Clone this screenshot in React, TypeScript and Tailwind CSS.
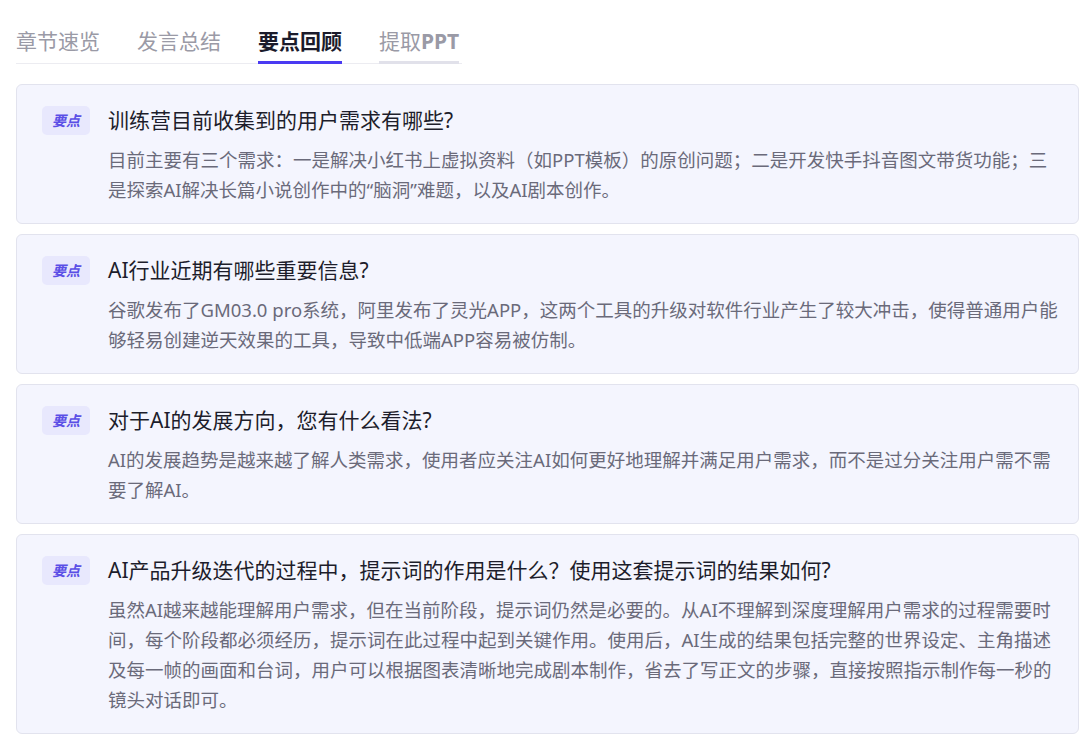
import React from 'react';

interface KeyPoint {
    question: string;
    answer: string;
}

const points: KeyPoint[] = [
    {
        question: '训练营目前收集到的用户需求有哪些?',
        answer: '目前主要有三个需求：一是解决小红书上虚拟资料（如PPT模板）的原创问题；二是开发快手抖音图文带货功能；三是探索AI解决长篇小说创作中的“脑洞”难题，以及AI剧本创作。',
    },
    {
        question: 'AI行业近期有哪些重要信息?',
        answer: '谷歌发布了GM03.0 pro系统，阿里发布了灵光APP，这两个工具的升级对软件行业产生了较大冲击，使得普通用户能够轻易创建逆天效果的工具，导致中低端APP容易被仿制。',
    },
    {
        question: '对于AI的发展方向，您有什么看法?',
        answer: 'AI的发展趋势是越来越了解人类需求，使用者应关注AI如何更好地理解并满足用户需求，而不是过分关注用户需不需要了解AI。',
    },
    {
        question: 'AI产品升级迭代的过程中，提示词的作用是什么？使用这套提示词的结果如何?',
        answer: '虽然AI越来越能理解用户需求，但在当前阶段，提示词仍然是必要的。从AI不理解到深度理解用户需求的过程需要时间，每个阶段都必须经历，提示词在此过程中起到关键作用。使用后，AI生成的结果包括完整的世界设定、主角描述及每一帧的画面和台词，用户可以根据图表清晰地完成剧本制作，省去了写正文的步骤，直接按照指示制作每一秒的镜头对话即可。',
    },
];

const tabs = ['章节速览', '发言总结', '要点回顾'];

const App: React.FC = () => {
    return (
        <div className="bg-white min-h-screen pl-4 pr-px pt-[26px] font-['Noto_Sans','Noto_Sans_CJK_SC',sans-serif]">
            {/* Tabs */}
            <div className="flex gap-[37px] w-[446px] border-b border-[#ececf1] text-[21px] leading-[31px]">
                {tabs.map((t, i) => (
                    <div
                        key={t}
                        className={
                            i === 2
                                ? 'pb-[4px] -mb-px border-b-[3px] border-[#4a3af2] text-[#1b1b2b] font-bold'
                                : 'pb-[4px] -mb-px border-b-[3px] border-transparent text-[#9a9aa6]'
                        }
                    >
                        {t}
                    </div>
                ))}
                <div className="pb-[4px] -mb-px border-b-[3px] border-[#e1e1ea] text-[#9a9aa6]">
                    提取<span className="font-bold">PPT</span>
                </div>
            </div>

            {/* Key points */}
            <div className="flex flex-col gap-[10px] mt-[20px]">
                {points.map((p, idx) => (
                    <div
                        key={idx}
                        className="flex gap-[18px] bg-[#f4f5fe] border border-[#e2e3ee] rounded-[6px] pl-[25px] pr-[16px] pt-[20px] pb-[18px]"
                    >
                        <span className="shrink-0 w-[48px] h-[29px] mt-[1px] flex items-center justify-center rounded-[5px] bg-[#e8e8fd] text-[#5b4fe6] text-[14px] font-bold italic">
                            要点
                        </span>
                        <div className="flex flex-col min-w-0">
                            <span className="text-[21px] leading-[30px] text-[#1d1d2b]">{p.question}</span>
                            <p className="mt-[10px] text-[18.5px] leading-[30px] text-[#6a6a7a]">{p.answer}</p>
                        </div>
                    </div>
                ))}
            </div>
        </div>
    );
};

export default App;
